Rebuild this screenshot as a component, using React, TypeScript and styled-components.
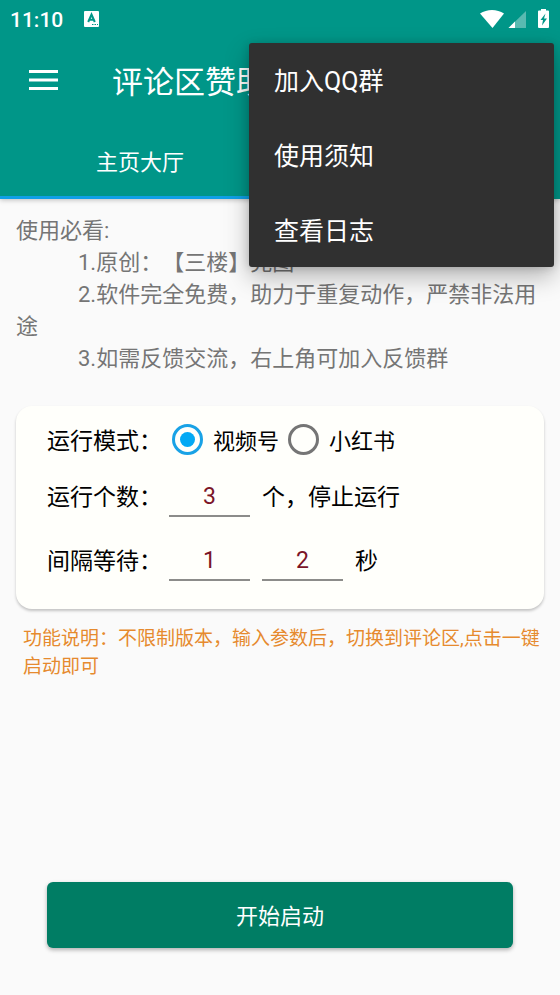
import React, { useState } from "react";
import styled, { createGlobalStyle } from "styled-components";

const GlobalStyle = createGlobalStyle`
  * { box-sizing: border-box; }
  html, body { height: 100%; }
  #root { height: 100%; }
  body {
    margin: 0;
    background: #fafafa;
    font-family: Roboto, "Noto Sans CJK SC", sans-serif;
    text-spacing-trim: space-all;
  }
  button, input { font-family: inherit; }
`;

const Screen = styled.div`
  display: flex;
  flex-direction: column;
  min-height: 100%;
  position: relative;
`;

const Header = styled.header`
  background: #009688;
  color: #fff;
  box-shadow: 0 1px 5px rgba(0, 0, 0, 0.25);
`;

const StatusBar = styled.div`
  display: flex;
  align-items: center;
  height: 37px;
  padding: 0 10px;
  gap: 21px;
`;

const Clock = styled.time`
  padding-top: 2px;
  font-size: 21px;
  font-weight: 500;
`;

const StatusIcons = styled.div`
  display: flex;
  align-items: center;
  margin-left: auto;
`;

const Toolbar = styled.div`
  display: flex;
  align-items: center;
  height: 88px;
  padding-left: 28px;
  gap: 52px;
`;

const MenuButton = styled.button`
  display: flex;
  padding: 0 0 2px;
  border: 0;
  background: none;
  color: inherit;
`;

const Title = styled.h1`
  margin: 0;
  padding-top: 4px;
  font-size: 31px;
  line-height: 44px;
  font-weight: 400;
  white-space: nowrap;
`;

const Tabs = styled.nav`
  display: grid;
  grid-template-columns: 1fr 1fr;
`;

const Tab = styled.button<{ $active?: boolean }>`
  height: 74px;
  padding: 0 0 2px;
  border: 0;
  border-bottom: 3px solid ${(p) => (p.$active ? "#0f9fe6" : "transparent")};
  background: none;
  color: #fff;
  font-size: 22px;
`;

const Main = styled.main`
  display: flex;
  flex: 1;
  flex-direction: column;
  padding: 16px 16px 47px;
`;

const Notice = styled.section`
  color: #757575;
  font-size: 22px;
  line-height: 32px;
`;

const NoticeLine = styled.p<{ $indent?: boolean }>`
  margin: 0;
  text-indent: ${(p) => (p.$indent ? "62px" : "0")};
`;

const Card = styled.form`
  display: flex;
  flex-direction: column;
  margin-top: 31px;
  padding: 4px 31px 13px;
  border-radius: 16px;
  background: #fffffb;
  box-shadow: 0 2px 3px rgba(0, 0, 0, 0.22);
`;

const Row = styled.div<{ $height: number }>`
  display: flex;
  align-items: center;
  height: ${(p) => p.$height}px;
  color: #000;
  font-size: 23px;
  white-space: nowrap;
`;

const RowLabel = styled.span`
  width: 122px;
`;

const RadioLabel = styled.label`
  display: flex;
  align-items: center;
  gap: 10px;
  margin-left: 3px;
  margin-right: 6px;
  font-size: 22px;
`;

const Radio = styled.input`
  appearance: none;
  display: grid;
  place-items: center;
  width: 31px;
  height: 31px;
  margin: 0;
  border: 3px solid #757575;
  border-radius: 50%;

  &:checked { border-color: #19a2e6; }
  &:checked::before {
    content: "";
    width: 15px;
    height: 15px;
    border-radius: 50%;
    background: #03a9f4;
  }
`;

const NumberField = styled.input`
  width: 81px;
  height: 44px;
  margin-right: 12px;
  padding: 5px 0 0;
  border: 0;
  border-bottom: 2px solid #8c8c8a;
  border-radius: 0;
  background: none;
  color: #7b1528;
  font-size: 23px;
  text-align: center;
`;

const Description = styled.p`
  margin: 16px 0 0;
  padding-left: 7px;
  color: #e68a2e;
  font-size: 19px;
  line-height: 28px;
`;

const StartButton = styled.button`
  height: 66px;
  margin: auto 31px 0;
  padding: 0 0 3px;
  border: 0;
  border-radius: 6px;
  background: #007d64;
  color: #fff;
  font-size: 22px;
  box-shadow: 0 2px 4px rgba(0, 0, 0, 0.3);
`;

const Menu = styled.div`
  position: absolute;
  top: 43px;
  right: 6px;
  display: flex;
  flex-direction: column;
  width: 305px;
  height: 224px;
  border-radius: 3px;
  background: #303030;
  box-shadow: 0 10px 24px rgba(0, 0, 0, 0.28), 0 1px 8px rgba(0, 0, 0, 0.16);
`;

const MenuItem = styled.button`
  flex: 1;
  padding: 0 25px 2px;
  border: 0;
  background: none;
  color: #fff;
  font-size: 25px;
  text-align: left;
`;

const KeyboardIcon = () => (
  <svg width="15" height="16" viewBox="0 0 15 16" aria-hidden="true">
    <rect width="15" height="16" rx="1" fill="#fff" />
    <path d="M4.200 11 7.500 3.500 10.800 11M5.300 8.700H9.700" fill="none" stroke="#009688" strokeWidth="2" />
    <path d="M8 13.500h1.500M10.500 13.500H12M13 13.500h1" stroke="#009688" strokeWidth="1.200" />
  </svg>
);

const HamburgerIcon = () => (
  <svg width="32" height="22" viewBox="0 0 32 22" aria-hidden="true">
    <path d="M1 2.500h29M1 11h29M1 19.500h29" stroke="#fff" strokeWidth="3" />
  </svg>
);

const SystemIcons = () => (
  <svg width="70" height="20" viewBox="0 0 70 20" fill="#fff" aria-hidden="true">
    <path d="M0 4.500C7-.2 17-.2 24 4.500L12.500 19Z" />
    <path d="M46 2v17H28.500Z" opacity=".35" />
    <path d="M35 12.500V19h-6.500Z" />
    <path d="M61 0h5v1.500h2q1 0 1 1V18q0 1-1 1h-9q-1 0-1-1V2.500q0-1 1-1h2Z" />
    <path d="m65.500 4.500-5 6.500h2.500l-1 5.500 5-7H64Z" fill="#009688" />
  </svg>
);

export default function App() {
  const [mode, setMode] = useState("video");

  return (
    <>
      <GlobalStyle />
      <Screen>
        <Header>
          <StatusBar>
            <Clock>11:10</Clock>
            <KeyboardIcon />
            <StatusIcons>
              <SystemIcons />
            </StatusIcons>
          </StatusBar>
          <Toolbar>
            <MenuButton type="button" aria-label="菜单">
              <HamburgerIcon />
            </MenuButton>
            <Title>评论区赞助</Title>
          </Toolbar>
          <Tabs>
            <Tab type="button" $active>主页大厅</Tab>
          </Tabs>
        </Header>
        <Main>
          <Notice>
            <NoticeLine>使用必看:</NoticeLine>
            <NoticeLine $indent>1.原创：【三楼】完图</NoticeLine>
            <NoticeLine $indent>2.软件完全免费，助力于重复动作，严禁非法用途</NoticeLine>
            <NoticeLine $indent>3.如需反馈交流，右上角可加入反馈群</NoticeLine>
          </Notice>
          <Card>
            <Row $height={58} role="radiogroup" aria-labelledby="mode-label">
              <RowLabel id="mode-label">运行模式：</RowLabel>
              <RadioLabel>
                <Radio type="radio" name="mode" checked={mode === "video"} onChange={() => setMode("video")} />
                视频号
              </RadioLabel>
              <RadioLabel>
                <Radio type="radio" name="mode" checked={mode === "red"} onChange={() => setMode("red")} />
                小红书
              </RadioLabel>
            </Row>
            <Row $height={54}>
              <RowLabel as="label" htmlFor="count">运行个数：</RowLabel>
              <NumberField id="count" inputMode="numeric" defaultValue="3" />
              个，停止运行
            </Row>
            <Row $height={74}>
              <RowLabel as="label" htmlFor="wait-min">间隔等待：</RowLabel>
              <NumberField id="wait-min" inputMode="numeric" defaultValue="1" />
              <NumberField aria-label="间隔等待" inputMode="numeric" defaultValue="2" />
              秒
            </Row>
          </Card>
          <Description>
            功能说明：不限制版本，输入参数后，切换到评论区,点击一键启动即可
          </Description>
          <StartButton type="button">开始启动</StartButton>
        </Main>
        <Menu role="menu">
          <MenuItem type="button" role="menuitem">加入QQ群</MenuItem>
          <MenuItem type="button" role="menuitem">使用须知</MenuItem>
          <MenuItem type="button" role="menuitem">查看日志</MenuItem>
        </Menu>
      </Screen>
    </>
  );
}
